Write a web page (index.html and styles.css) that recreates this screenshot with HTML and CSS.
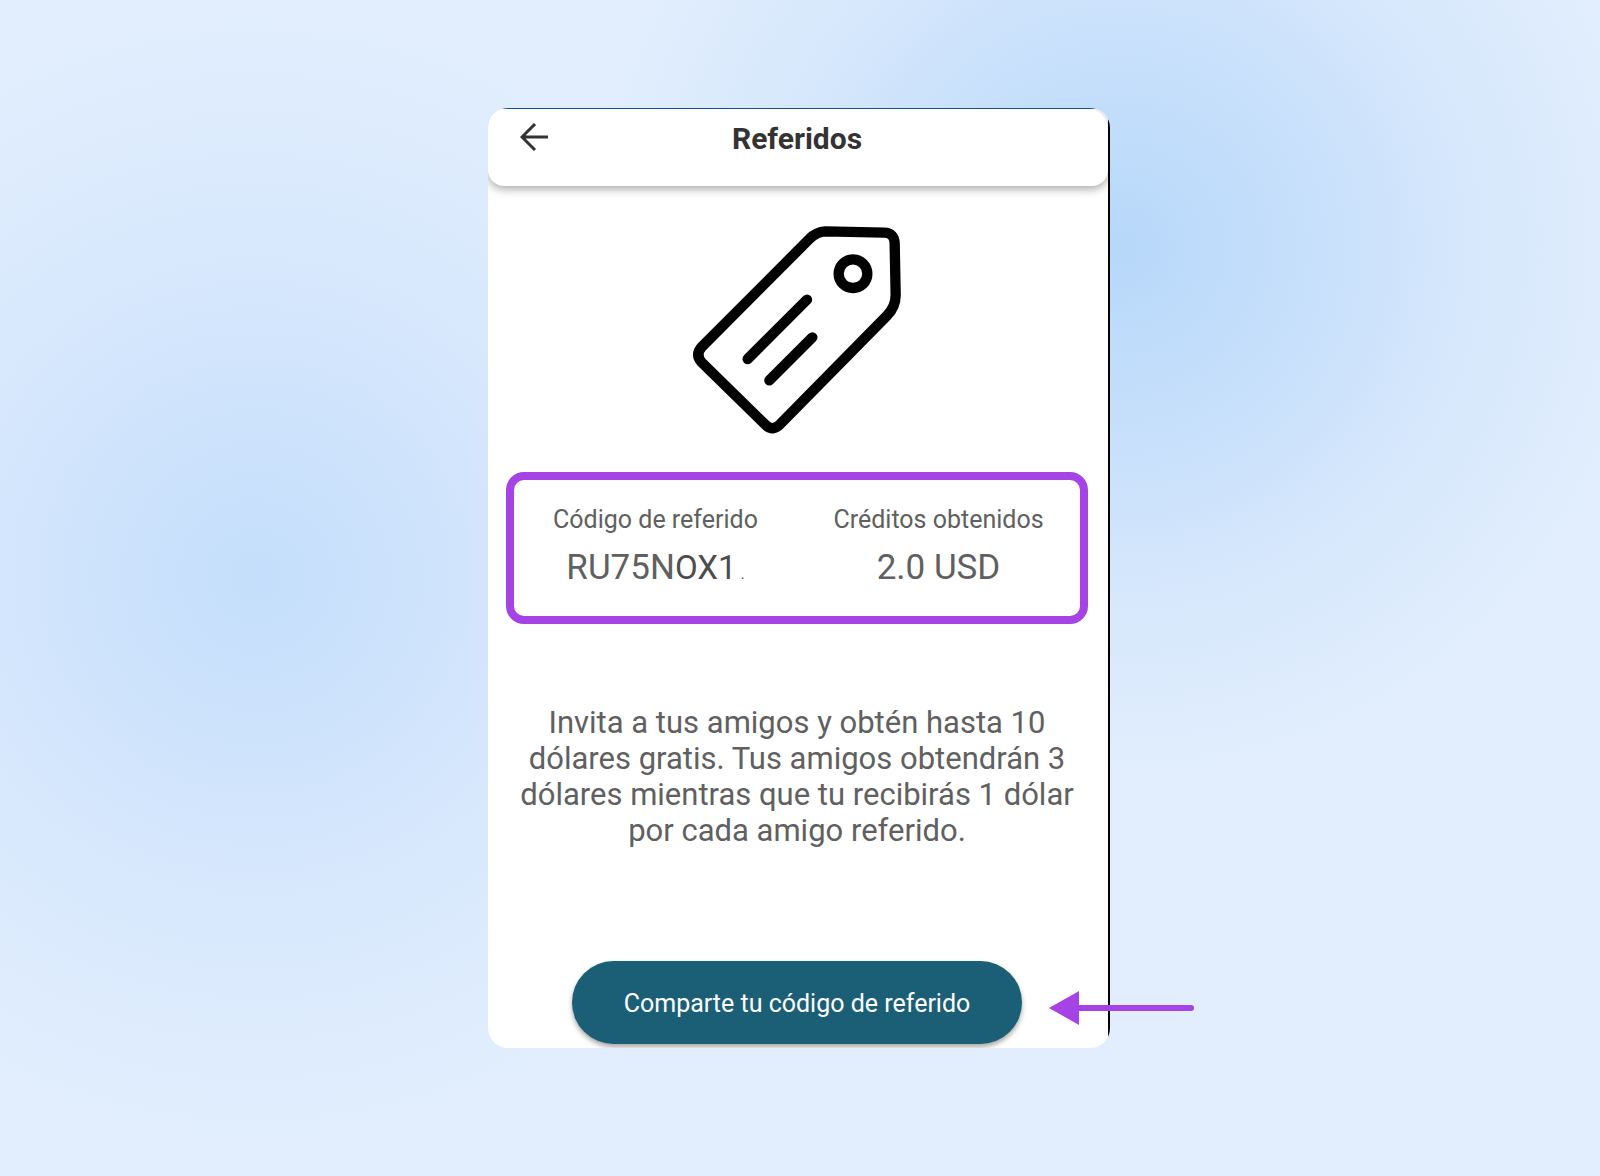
FILE: index.html
```html
<!DOCTYPE html>
<html lang="es">
<head>
<meta charset="utf-8">
<meta name="viewport" content="width=device-width, initial-scale=1">
<title>Referidos</title>
<link rel="stylesheet" href="styles.css">
</head>
<body>
<main class="stage">
  <div class="frame">
    <section class="phone">
      <header class="topbar">
        <button class="back" type="button" aria-label="Volver">
          <svg width="28" height="28" viewBox="0 0 28 28" fill="none" stroke="currentColor" stroke-width="3"><path d="M28 14H2M15 1 2 14l13 13"/></svg>
        </button>
        <h1 class="title">Referidos</h1>
      </header>
      <div class="content">
        <svg class="tag" viewBox="35 30 630 630" fill="none" stroke="#000" stroke-width="31" stroke-linecap="round" stroke-linejoin="round" aria-hidden="true">
          <path d="M435 49 612 53Q642 54 643 85L646 240Q646 275 620 302L301 626Q278 652 255 629L64 442Q44 419 64 396L388 71Q407 51 435 49Z"/>
          <circle cx="518" cy="176" r="43"/>
          <path d="M380 254 202 432M396 367 267 496"/>
        </svg>
        <dl class="summary">
          <div class="stat">
            <dt class="label">Código de referido</dt>
            <dd class="value">RU75N<span class="code-end">OX1</span><span class="dot"> .</span></dd>
          </div>
          <div class="stat">
            <dt class="label">Créditos obtenidos</dt>
            <dd class="value">2.0 USD</dd>
          </div>
        </dl>
        <p class="message">Invita a tus amigos y obtén hasta 10 dólares gratis. Tus amigos obtendrán 3 dólares mientras que tu recibirás 1 dólar por cada amigo referido.</p>
        <button class="share" type="button">Comparte tu código de referido</button>
      </div>
    </section>
    <svg class="pointer" width="146" height="34" viewBox="0 0 146 34" aria-hidden="true"><path d="M0 17 30 0v34z" fill="#a643e6"/><path d="M28 17h114" stroke="#a643e6" stroke-width="6" stroke-linecap="round"/></svg>
  </div>
</main>
</body>
</html>
```
FILE: styles.css
```css
* {
  box-sizing: border-box;
}

body {
  margin: 0;
  font-family: Roboto, "Liberation Sans", sans-serif;
  color: #606060;
}

.stage {
  display: flex;
  justify-content: center;
  align-items: flex-start;
  min-height: 100vh;
  padding: 108px 18px 108px 16px;
  background:
    radial-gradient(circle at 70% 21%, #b7d8fa 0, #c6dffb 180px, #d7e8fc 360px, rgba(226, 238, 253, 0) 540px),
    radial-gradient(circle at 16% 49%, #c4defb 0, #d0e4fc 200px, #d9e9fd 350px, rgba(226, 238, 253, 0) 580px),
    #e2eefd;
}

.frame {
  position: relative;
  width: 100%;
  max-width: 622px;
}

.phone {
  overflow: hidden;
  border-radius: 20px;
  padding: 1px 2px 0 0;
  background:
    linear-gradient(#1259a8, #1259a8) top / 100% 1px no-repeat,
    linear-gradient(#000, #000) right / 2px 100% no-repeat,
    #fff;
}

.topbar {
  display: grid;
  grid-template-columns: 60px 1fr 60px;
  align-items: start;
  height: 77px;
  padding: 10px 2px 0 0;
  border-radius: 0 20px 16px 16px;
  background: #fff;
  box-shadow: 0 3px 10px rgba(0, 0, 0, 0.35);
  color: #333;
}

.back {
  justify-self: end;
  width: 28px;
  height: 40px;
  padding: 4px 0 8px;
  border: 0;
  background: none;
  color: inherit;
}

.back svg {
  display: block;
}

.title {
  margin: 0;
  font-size: 30px;
  line-height: 40px;
  font-weight: 700;
  text-align: center;
}

.content {
  display: flex;
  flex-direction: column;
  align-items: center;
  padding: 39px 20px 4px 18px;
}

.tag {
  width: 210px;
  height: 210px;
}

.summary {
  display: grid;
  grid-template-columns: 1fr 1fr;
  width: 100%;
  margin: 37px 0 0;
  padding: 24px 0 28px;
  border: 8px solid #a643e6;
  border-radius: 18px;
  text-align: center;
}

.label {
  font-size: 25px;
  line-height: 32px;
}

.value {
  margin: 12px 0 0;
  font-size: 35px;
  line-height: 40px;
}

.code-end {
  color: #4c4c4c;
  font-size: 33px;
  line-height: 1;
}

.dot {
  font-size: 16px;
  line-height: 1;
}

.message {
  margin: 81px 0 0;
  font-size: 31px;
  line-height: 36px;
  text-align: center;
}

.share {
  width: 450px;
  max-width: 100%;
  height: 83px;
  margin: 112px 0 0;
  padding: 2px 0 0;
  border: 0;
  border-radius: 42px;
  background: #1b5f76;
  box-shadow: 0 3px 5px rgba(0, 0, 0, 0.35);
  color: #fff;
  font-family: inherit;
  font-size: 25px;
}

.pointer {
  position: absolute;
  right: -85px;
  bottom: 23px;
}
```
